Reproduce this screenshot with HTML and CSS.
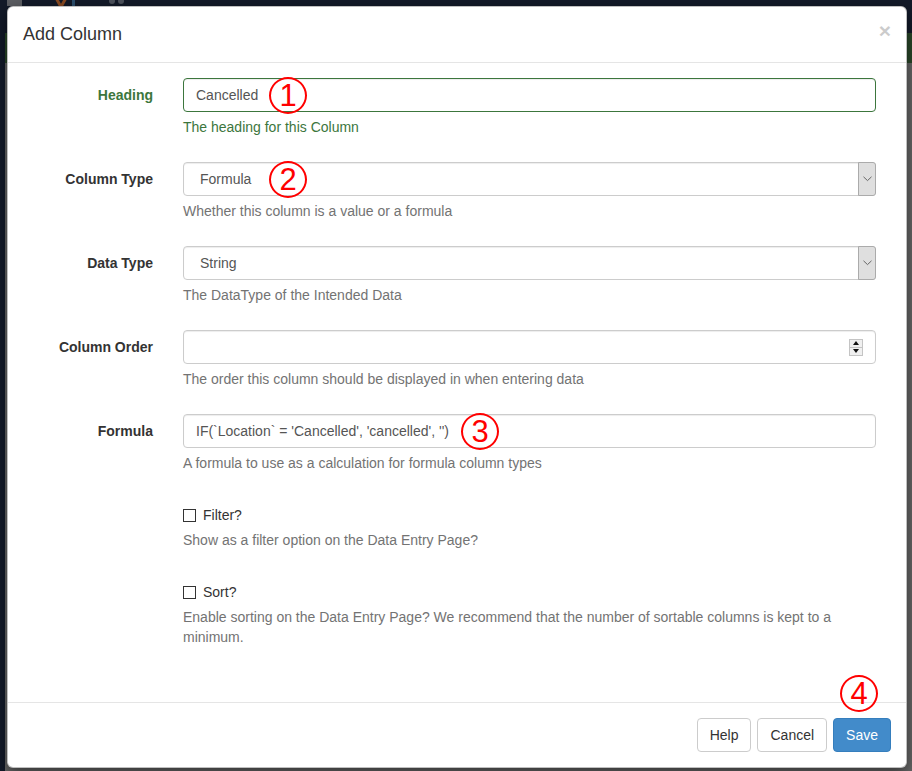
FILE: index.html
```html
<!DOCTYPE html>
<html lang="en">
<head>
<meta charset="utf-8">
<title>Add Column</title>
<link rel="stylesheet" href="styles.css">
</head>
<body>
<div class="page">
  <div class="page-nav">
    <span class="nav-block"></span>
    <svg class="nav-logo" width="80" height="8" viewBox="0 0 80 8">
      <polyline points="0,-4 6,7 12,-4" fill="none" stroke="#8a4a22" stroke-width="3"/>
      <rect x="17" y="0" width="3" height="7" fill="#2c4f6e"/>
      <circle cx="57" cy="1" r="3" fill="#4d525c"/>
      <circle cx="66" cy="1" r="3" fill="#4d525c"/>
    </svg>
  </div>
  <div class="page-main">
    <div class="page-side"></div>
    <div class="page-content">
      <div class="page-band"></div>
    </div>
  </div>
</div>

<div class="modal">
  <div class="modal-header">
    <h4 class="modal-title">Add Column</h4>
    <span class="close">&times;</span>
  </div>
  <div class="modal-body">
    <div class="form-group has-success">
      <label class="control-label">Heading</label>
      <div class="field">
        <div class="form-control">Cancelled</div>
        <p class="help-block">The heading for this Column</p>
      </div>
    </div>
    <div class="form-group">
      <label class="control-label">Column Type</label>
      <div class="field">
        <div class="form-control select"><span>Formula</span><span class="select-arrow"><svg width="9" height="6" viewBox="0 0 9 6"><polyline points="0.5,0.8 4.5,4.6 8.5,0.8" fill="none" stroke="#666" stroke-width="1"/></svg></span></div>
        <p class="help-block">Whether this column is a value or a formula</p>
      </div>
    </div>
    <div class="form-group">
      <label class="control-label">Data Type</label>
      <div class="field">
        <div class="form-control select"><span>String</span><span class="select-arrow"><svg width="9" height="6" viewBox="0 0 9 6"><polyline points="0.5,0.8 4.5,4.6 8.5,0.8" fill="none" stroke="#666" stroke-width="1"/></svg></span></div>
        <p class="help-block">The DataType of the Intended Data</p>
      </div>
    </div>
    <div class="form-group">
      <label class="control-label">Column Order</label>
      <div class="field">
        <div class="form-control number"><span class="spinner"><span class="spin-up"></span><span class="spin-down"></span></span></div>
        <p class="help-block">The order this column should be displayed in when entering data</p>
      </div>
    </div>
    <div class="form-group">
      <label class="control-label">Formula</label>
      <div class="field">
        <div class="form-control">IF(`Location` = 'Cancelled', 'cancelled', '')</div>
        <p class="help-block">A formula to use as a calculation for formula column types</p>
      </div>
    </div>
    <div class="form-group">
      <div class="control-spacer"></div>
      <div class="field">
        <div class="checkbox"><span class="box"></span><span>Filter?</span></div>
        <p class="help-block">Show as a filter option on the Data Entry Page?</p>
      </div>
    </div>
    <div class="form-group">
      <div class="control-spacer"></div>
      <div class="field">
        <div class="checkbox"><span class="box"></span><span>Sort?</span></div>
        <p class="help-block">Enable sorting on the Data Entry Page? We recommend that the number of sortable columns is kept to a minimum.</p>
      </div>
    </div>
  </div>
  <div class="modal-footer">
    <button class="btn">Help</button>
    <button class="btn">Cancel</button>
    <button class="btn btn-primary">Save</button>
  </div>
</div>

<span class="mark mark-1">1</span>
<span class="mark mark-2">2</span>
<span class="mark mark-3">3</span>
<span class="mark mark-4">4</span>
</body>
</html>
```

FILE: styles.css
```css
* { box-sizing: border-box; }

html, body {
  margin: 0;
  padding: 0;
  width: 912px;
  height: 771px;
  overflow: hidden;
}

body {
  background: #131a29;
  font-family: "Liberation Sans", Arial, sans-serif;
  font-size: 14px;
  line-height: 20px;
  color: #333;
  position: relative;
}

/* ---- dimmed page beneath the modal ---- */
.page {
  height: 771px;
  display: flex;
  flex-direction: column;
}
.page-nav {
  height: 33px;
  background: #131a29;
  display: flex;
  align-items: flex-start;
}
.nav-block {
  width: 15px;
  height: 6px;
  margin-left: 7px;
  background: #5c5e63;
}
.nav-logo {
  display: block;
  margin-left: 33px;
}
.page-main {
  flex: 1;
  display: flex;
}
.page-side {
  width: 5px;
  background: #131a29;
}
.page-content {
  flex: 1;
  background: #666;
}
.page-band {
  height: 30px;
  background: #2a4729;
}

/* ---- modal ---- */
.modal {
  position: absolute;
  left: 7px;
  top: 6px;
  width: 900px;
  background: #fff;
  border: 1px solid rgba(0, 0, 0, .25);
  border-radius: 6px;
  box-shadow: 0 5px 15px rgba(0, 0, 0, .5);
}

.modal-header {
  display: flex;
  align-items: flex-start;
  justify-content: space-between;
  padding: 15px;
  border-bottom: 1px solid #e5e5e5;
}
.modal-title {
  margin: 0;
  font-size: 18px;
  font-weight: normal;
  line-height: 25px;
  color: #333;
}
.close {
  margin-top: -2px;
  font-size: 21px;
  font-weight: bold;
  line-height: 1;
  color: #000;
  opacity: .2;
}

.modal-body {
  padding: 15px 15px 30px;
}

.form-group {
  display: flex;
  margin-bottom: 15px;
}
.control-label,
.control-spacer {
  flex: 0 0 145px;
  padding-right: 15px;
  padding-top: 7px;
  text-align: right;
  font-weight: bold;
}
.field {
  flex: 1;
  padding: 0 15px;
}

.form-control {
  display: flex;
  align-items: center;
  height: 34px;
  padding: 6px 12px;
  border: 1px solid #ccc;
  border-radius: 4px;
  color: #555;
  background: #fff;
  box-shadow: inset 0 1px 1px rgba(0, 0, 0, .075);
  white-space: pre;
}
.form-control.select {
  padding: 0 0 0 16px;
}
.select-arrow {
  margin: -1px -1px -1px auto;
  align-self: stretch;
  width: 18px;
  display: flex;
  align-items: center;
  justify-content: center;
  background: #dfdfdf;
  border: 1px solid #ababab;
  border-radius: 0 3px 3px 0;
}
.form-control.number {
  justify-content: flex-end;
  padding-right: 12px;
}
.spinner {
  width: 14px;
  height: 17px;
  display: flex;
  flex-direction: column;
  border: 1px solid #c4c4c4;
  background: #f0f0f0;
}
.spin-up,
.spin-down {
  flex: 1;
  display: flex;
  align-items: center;
  justify-content: center;
}
.spin-up {
  border-bottom: 1px solid #c4c4c4;
}
.spin-up::before {
  content: "";
  border-left: 3.5px solid transparent;
  border-right: 3.5px solid transparent;
  border-bottom: 4px solid #111;
}
.spin-down::before {
  content: "";
  border-left: 3.5px solid transparent;
  border-right: 3.5px solid transparent;
  border-top: 4px solid #111;
}

.help-block {
  margin: 5px 0 10px;
  color: #737373;
}

.has-success .control-label,
.has-success .help-block {
  color: #3c763d;
}
.has-success .form-control {
  border-color: #3c763d;
}

.checkbox {
  display: flex;
  align-items: center;
  gap: 7px;
  padding-top: 7px;
  height: 27px;
  color: #333;
}
.checkbox .box {
  width: 13px;
  height: 13px;
  border: 1px solid #333;
  background: #fff;
}

.modal-footer {
  display: flex;
  justify-content: flex-end;
  gap: 6px;
  padding: 15px;
  border-top: 1px solid #e5e5e5;
}
.btn {
  font-family: inherit;
  font-size: 14px;
  line-height: 20px;
  padding: 6px 12px;
  border: 1px solid #ccc;
  border-radius: 4px;
  background: #fff;
  color: #333;
}
.btn-primary {
  background: #428bca;
  border-color: #357ebd;
  color: #fff;
}

/* ---- red annotation markers ---- */
.mark {
  position: absolute;
  width: 38px;
  height: 37px;
  border: 2px solid #f00;
  border-radius: 50%;
  color: #f00;
  font-family: "Liberation Sans", Arial, sans-serif;
  font-size: 31px;
  line-height: 33px;
  text-align: center;
}
.mark-1 { left: 269px; top: 77px; }
.mark-2 { left: 269px; top: 161px; }
.mark-3 { left: 461px; top: 413px; }
.mark-4 { left: 840px; top: 675px; }
```
